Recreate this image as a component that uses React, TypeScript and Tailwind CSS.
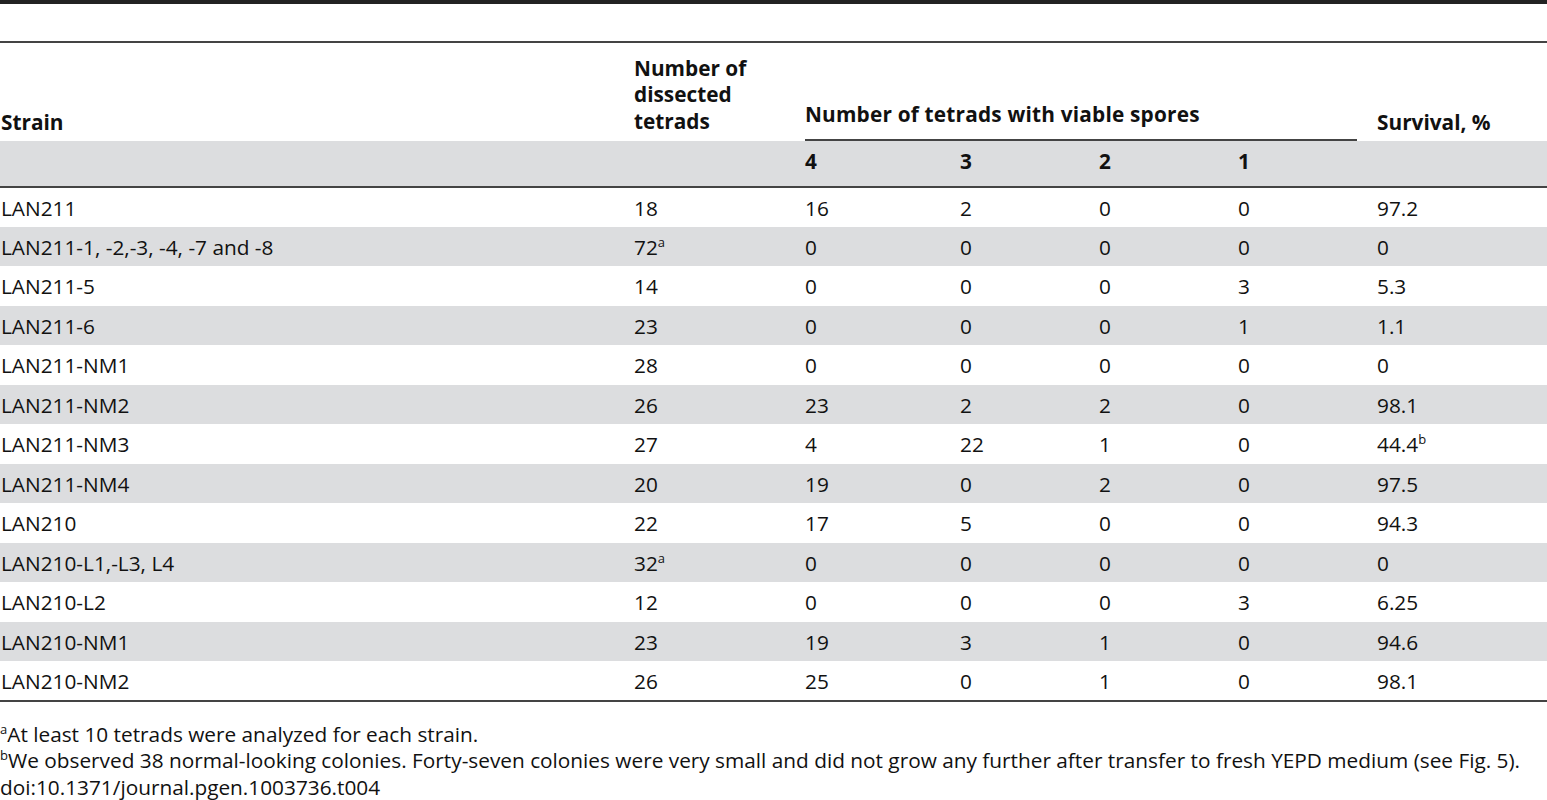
import React from "react";

type Row = { s: string; n: string; na?: boolean; c: string[]; sv: string; svb?: boolean };

const rows: Row[] = [
  { s: "LAN211", n: "18", c: ["16", "2", "0", "0"], sv: "97.2" },
  { s: "LAN211-1, -2,-3, -4, -7 and -8", n: "72", na: true, c: ["0", "0", "0", "0"], sv: "0" },
  { s: "LAN211-5", n: "14", c: ["0", "0", "0", "3"], sv: "5.3" },
  { s: "LAN211-6", n: "23", c: ["0", "0", "0", "1"], sv: "1.1" },
  { s: "LAN211-NM1", n: "28", c: ["0", "0", "0", "0"], sv: "0" },
  { s: "LAN211-NM2", n: "26", c: ["23", "2", "2", "0"], sv: "98.1" },
  { s: "LAN211-NM3", n: "27", c: ["4", "22", "1", "0"], sv: "44.4", svb: true },
  { s: "LAN211-NM4", n: "20", c: ["19", "0", "2", "0"], sv: "97.5" },
  { s: "LAN210", n: "22", c: ["17", "5", "0", "0"], sv: "94.3" },
  { s: "LAN210-L1,-L3, L4", n: "32", na: true, c: ["0", "0", "0", "0"], sv: "0" },
  { s: "LAN210-L2", n: "12", c: ["0", "0", "0", "3"], sv: "6.25" },
  { s: "LAN210-NM1", n: "23", c: ["19", "3", "1", "0"], sv: "94.6" },
  { s: "LAN210-NM2", n: "26", c: ["25", "0", "1", "0"], sv: "98.1" },
];

const Sup = ({ t }: { t: string }) => (
  <sup className="text-[13px] relative -top-[8px]">{t}</sup>
);

export default function App() {
  return (
    <div
      className="w-[1547px] h-[800px] bg-white text-[#111] text-[20.8px] leading-[26px] overflow-hidden"
      style={{ fontFamily: '"Open Sans", "Liberation Sans", sans-serif' }}
    >
      <div className="h-[4px] bg-[#222]" />
      <div className="h-[37px]" />
      <div className="h-[2px] bg-[#444]" />
      <table className="w-[1547px] table-fixed border-collapse">
        <colgroup>
          <col className="w-[634px]" />
          <col className="w-[171px]" />
          <col className="w-[155px]" />
          <col className="w-[139px]" />
          <col className="w-[139px]" />
          <col className="w-[139px]" />
          <col className="w-[170px]" />
        </colgroup>
        <thead>
          <tr className="h-[98px] font-bold">
            <th className="text-left align-bottom pb-[6px] font-bold pl-[1px]">Strain</th>
            <th className="text-left align-bottom pb-[7px] font-bold leading-[26.5px]">
              Number of
              <br />
              dissected
              <br />
              tetrads
            </th>
            <th colSpan={4} className="text-left align-bottom p-0 font-bold">
              <div className="mr-[20px] border-b-2 border-[#444] pb-[12px] tracking-[0.2px]">
                Number of tetrads with viable spores
              </div>
            </th>
            <th className="text-left align-bottom pb-[6px] font-bold">Survival, %</th>
          </tr>
          <tr className="h-[46px] bg-[#dcdddf] font-bold">
            <th />
            <th />
            <th className="text-left pb-[6px] font-bold">4</th>
            <th className="text-left pb-[6px] font-bold">3</th>
            <th className="text-left pb-[6px] font-bold">2</th>
            <th className="text-left pb-[6px] font-bold">1</th>
            <th />
          </tr>
        </thead>
        <tbody className="border-t-2 border-b-2 border-[#444]">
          {rows.map((r, i) => (
            <tr key={i} className={`h-[39.5px] ${i % 2 === 1 ? "bg-[#dcdddf]" : ""}`}>
              <td className="pl-[1px] pt-[1px]">{r.s}</td>
              <td className="pt-[1px]">
                {r.n}
                {r.na && <Sup t="a" />}
              </td>
              {r.c.map((c, j) => (
                <td key={j} className="pt-[1px]">
                  {c}
                </td>
              ))}
              <td className="pt-[1px]">
                {r.sv}
                {r.svb && <Sup t="b" />}
              </td>
            </tr>
          ))}
        </tbody>
      </table>
      <div className="pt-[19px] leading-[26.5px]">
        <div>
          <Sup t="a" />
          At least 10 tetrads were analyzed for each strain.
        </div>
        <div>
          <Sup t="b" />
          We observed 38 normal-looking colonies. Forty-seven colonies were very small and did not grow any further after transfer to fresh YEPD medium (see Fig. 5).
        </div>
        <div>doi:10.1371/journal.pgen.1003736.t004</div>
      </div>
    </div>
  );
}
